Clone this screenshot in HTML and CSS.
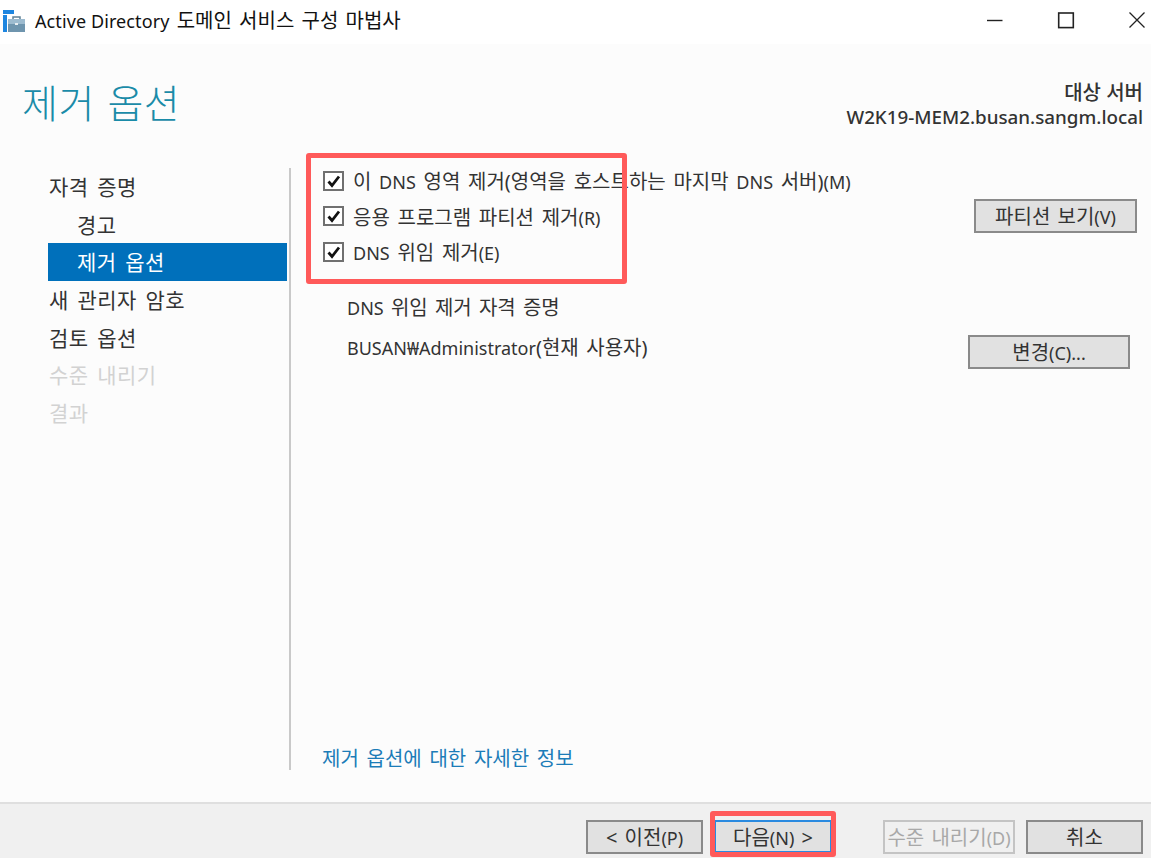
FILE: index.html
```html
<!DOCTYPE html>
<html lang="ko">
<head>
    <meta charset="UTF-8">
    <title>Active Directory 도메인 서비스 구성 마법사</title>
    <link rel="stylesheet" href="styles.css">
</head>
<body>
    <div class="window">
        <div class="titlebar">
            <svg class="app-icon" width="24" height="24" viewBox="0 0 24 24">
                <rect x="0" y="0" width="11" height="4" fill="#1e86e0"/>
                <rect x="0" y="5" width="4" height="17" fill="#1e86e0"/>
                <path d="M10 9V7h7v2" fill="none" stroke="#5f8196" stroke-width="1.5"/>
                <rect x="5" y="9" width="17" height="5" fill="#9dbbcf"/>
                <rect x="5" y="14" width="17" height="8" fill="#6f95ae"/>
                <rect x="12" y="13" width="3" height="2" fill="#e8eef2"/>
            </svg>
            <span class="title-text"><span class="la">Active Directory</span> 도메인 서비스 구성 마법사</span>
            <div class="win-controls">
                <svg width="18" height="18" viewBox="0 0 18 18"><path d="M1 9.5h15.5" stroke="#222" stroke-width="1.4"/></svg>
                <svg width="18" height="18" viewBox="0 0 18 18"><rect x="1.7" y="2" width="14.6" height="14.6" fill="none" stroke="#222" stroke-width="1.6"/></svg>
                <svg width="18" height="18" viewBox="0 0 18 18"><path d="M1.5 1.5l15 15M16.5 1.5l-15 15" stroke="#222" stroke-width="1.3"/></svg>
            </div>
        </div>

        <div class="header">
            <h1>제거 옵션</h1>
            <div class="server">
                <div>대상 서버</div>
                <div class="server-name">W2K19-MEM2.busan.sangm.local</div>
            </div>
        </div>

        <div class="main">
            <ul class="steps">
                <li>자격 증명</li>
                <li class="sub">경고</li>
                <li class="sub selected">제거 옵션</li>
                <li>새 관리자 암호</li>
                <li>검토 옵션</li>
                <li class="disabled">수준 내리기</li>
                <li class="disabled">결과</li>
            </ul>

            <div class="panel">
                <div class="check-area">
                    <div class="check-group">
                        <div class="highlight highlight-checks"></div>
                        <label class="check-row">
                            <svg class="check" width="21" height="20" viewBox="0 0 21 20"><rect x="1" y="1" width="19" height="18" fill="#fff" stroke="#707070" stroke-width="2"/><path d="M5.5 10.5l3.5 4 7-9" fill="none" stroke="#111" stroke-width="2.8"/></svg>
                            <span>이 <span class="la">DNS</span> 영역 제거(영역을 호스트하는 마지막 <span class="la">DNS</span> 서버)<span class="la">(M)</span></span>
                        </label>
                        <label class="check-row">
                            <svg class="check" width="21" height="20" viewBox="0 0 21 20"><rect x="1" y="1" width="19" height="18" fill="#fff" stroke="#707070" stroke-width="2"/><path d="M5.5 10.5l3.5 4 7-9" fill="none" stroke="#111" stroke-width="2.8"/></svg>
                            <span>응용 프로그램 파티션 제거<span class="la">(R)</span></span>
                        </label>
                        <label class="check-row">
                            <svg class="check" width="21" height="20" viewBox="0 0 21 20"><rect x="1" y="1" width="19" height="18" fill="#fff" stroke="#707070" stroke-width="2"/><path d="M5.5 10.5l3.5 4 7-9" fill="none" stroke="#111" stroke-width="2.8"/></svg>
                            <span><span class="la">DNS</span> 위임 제거<span class="la">(E)</span></span>
                        </label>
                    </div>
                    <button class="btn btn-partition">파티션 보기<span class="la">(V)</span></button>
                </div>

                <div class="cred-title"><span class="la">DNS</span> 위임 제거 자격 증명</div>
                <div class="cred-row">
                    <span class="cred-user"><span class="la">BUSAN₩Administrator</span>(현재 사용자)</span>
                    <button class="btn btn-change">변경<span class="la">(C)...</span></button>
                </div>

                <a class="more-link" href="#">제거 옵션에 대한 자세한 정보</a>
            </div>
        </div>

        <div class="footer">
            <button class="btn btn-prev">&lt; 이전<span class="la">(P)</span></button>
            <div class="next-wrap">
                <div class="highlight highlight-next"></div>
                <button class="btn btn-next">다음<span class="la">(N)</span> &gt;</button>
            </div>
            <button class="btn btn-demote" disabled>수준 내리기<span class="la">(D)</span></button>
            <button class="btn btn-cancel">취소</button>
        </div>
    </div>
</body>
</html>
```

FILE: styles.css
```css
* {
    box-sizing: border-box;
}
html, body {
    margin: 0;
    padding: 0;
}
body {
    font-family: "Noto Sans", "Noto Sans CJK KR", sans-serif;
    font-size: 20px;
    color: #333;
    overflow: hidden;
}
/* latin runs sit smaller than the hangul around them */
.la {
    font-size: 18px;
    word-spacing: 0;
}
.window {
    width: 1151px;
    height: 858px;
    display: flex;
    flex-direction: column;
    background: #fcfcfc;
    overflow: hidden;
}

/* title bar */
.titlebar {
    height: 44px;
    flex: none;
    background: #fff;
    display: flex;
    align-items: center;
    padding: 0 5px 6px 3px;
}
.app-icon {
    margin-right: 8px;
    margin-top: 6px;
}
.title-text {
    color: #111;
    word-spacing: 2px;
}
.title-text .la {
    letter-spacing: 0.1px;
}
.win-controls {
    margin-left: auto;
    display: flex;
    gap: 53px;
    margin-top: 1px;
}

/* header */
.header {
    height: 124px;
    flex: none;
    display: flex;
    justify-content: space-between;
    padding: 0 8px 0 22px;
}
.header h1 {
    margin: 30px 0 0;
    font-size: 39px;
    line-height: 58px;
    font-weight: 300;
    color: #1a8ba8;
    letter-spacing: 0.5px;
    word-spacing: 2px;
}
.server {
    margin-top: 36px;
    text-align: right;
    line-height: 25px;
    font-weight: 500;
    color: #333;
}
.server-name {
    font-size: 18.8px;
}

/* body */
.main {
    flex: 1;
    display: flex;
    padding-bottom: 32px;
}
.steps {
    list-style: none;
    margin: 0;
    padding: 0 0 0 48px;
    width: 289px;
    flex: none;
}
.steps li {
    height: 37.7px;
    line-height: 39.5px;
    font-size: 21px;
    letter-spacing: 0.4px;
    word-spacing: 3px;
    color: #333;
    width: 239px;
    padding-left: 1px;
}
.steps li.sub {
    padding-left: 29px;
}
.steps li.selected {
    background: #0070bb;
    color: #fff;
}
.steps li.disabled {
    color: #d2d2d2;
}
.panel {
    flex: 1;
    border-left: 2px solid #c9c9c9;
    padding: 0 14px 0 32px;
    display: flex;
    flex-direction: column;
}
.check-area {
    display: flex;
    justify-content: space-between;
    align-items: flex-start;
    height: 122px;
}
.check-group {
    position: relative;
    margin-top: -5px;
}
.check-row {
    display: flex;
    align-items: center;
    gap: 9px;
    height: 35.5px;
    color: #333;
    word-spacing: 2.5px;
}
.check {
    flex: none;
}
.btn {
    font-family: inherit;
    font-size: 20px;
    color: #333;
    background: #e1e1e1;
    border: 2px solid #8a8a8a;
    height: 34px;
    padding: 2px 0 0;
    line-height: 28px;
    word-spacing: 2px;
}
.btn-partition {
    width: 163px;
    margin-top: 31px;
}
.cred-title {
    margin-left: 24px;
    height: 34px;
    line-height: 35px;
    word-spacing: 2px;
}
.cred-row {
    display: flex;
    justify-content: space-between;
    align-items: flex-start;
    margin-left: 24px;
    margin-right: 7px;
    margin-top: 11px;
    word-spacing: 2.4px;
}
.cred-user {
    line-height: 26px;
}
.btn-change {
    width: 162px;
}
.more-link {
    margin-top: auto;
    margin-left: -1px;
    line-height: 22px;
    color: #1c7cb8;
    text-decoration: none;
    word-spacing: 2.5px;
}

/* footer */
.footer {
    height: 56px;
    flex: none;
    background: #f0f0f0;
    border-top: 2px solid #dfdfdf;
    display: flex;
    align-items: flex-start;
    padding: 16px 8px 0 586px;
}
.btn-prev {
    width: 117px;
}
.next-wrap {
    position: relative;
    margin-left: 11px;
}
.btn-next {
    width: 118px;
    height: 33px;
    border-color: #2a8ae0;
    display: block;
}
.btn-demote {
    width: 132px;
    margin-left: 51px;
    background: #f0f0f0;
    border-color: #c4c4c4;
    color: #a8a8a8;
}
.btn-cancel {
    width: 117px;
    margin-left: 11px;
}

/* red call-outs */
.highlight {
    position: absolute;
    border: 5px solid #ff5a5a;
    border-radius: 3px;
    pointer-events: none;
}
.highlight-checks {
    left: -17px;
    top: -10px;
    width: 321px;
    height: 131px;
}
.highlight-next {
    left: -4px;
    top: -9px;
    width: 126px;
    height: 46px;
}
```
